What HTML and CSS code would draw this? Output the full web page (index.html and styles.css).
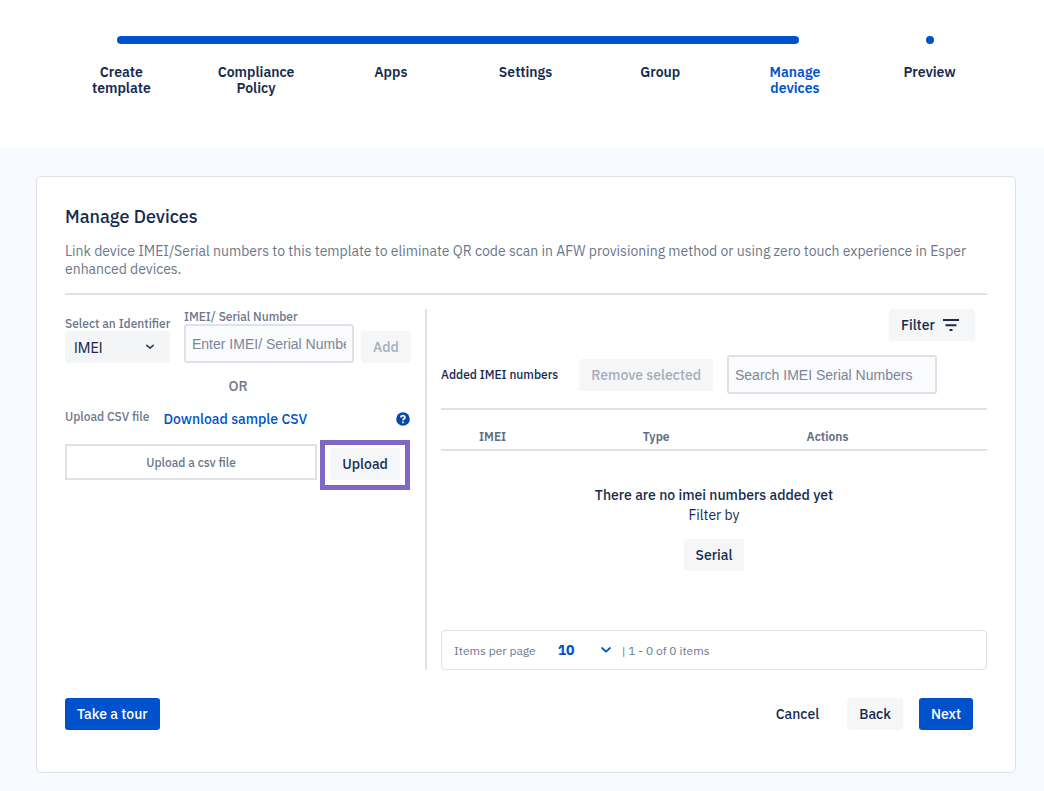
FILE: index.html
```
<!DOCTYPE html>
<html lang="en">
<head>
    <meta charset="UTF-8">
    <meta name="viewport" content="width=device-width, initial-scale=1">
    <title>Manage Devices</title>
    <link rel="stylesheet" href="styles.css">
</head>
<body>

    <header class="stepper">
        <div class="track">
            <div class="track-done"></div>
            <div class="track-dot"></div>
        </div>
        <ol class="steps">
            <li>Create<br>template</li>
            <li>Compliance<br>Policy</li>
            <li>Apps</li>
            <li>Settings</li>
            <li>Group</li>
            <li class="current" aria-current="step">Manage<br>devices</li>
            <li>Preview</li>
        </ol>
    </header>

    <main class="page">
        <section class="card">
            <h1>Manage Devices</h1>
            <p class="intro">Link device IMEI/Serial numbers to this template to eliminate QR code scan in AFW provisioning method or using zero touch experience in Esper enhanced devices.</p>

            <div class="content">
                <div class="add-panel">
                    <div class="add-row">
                        <div class="field">
                            <label for="identifier">Select an Identifier</label>
                            <div class="select-box">
                                <select id="identifier">
                                    <option>IMEI</option>
                                    <option>Serial</option>
                                </select>
                                <svg class="chevron" viewBox="0 0 10 6"><path d="M1.8 1.3 5 4.2 8.2 1.3"/></svg>
                            </div>
                        </div>
                        <div class="field field-number">
                            <label for="number">IMEI/ Serial Number</label>
                            <input type="text" id="number" placeholder="Enter IMEI/ Serial Number">
                        </div>
                        <button class="btn" type="button" disabled>Add</button>
                    </div>

                    <p class="or">OR</p>

                    <div class="csv-head">
                        <label for="csvFile">Upload CSV file</label>
                        <a href="#">Download sample CSV</a>
                        <svg class="help" viewBox="0 0 14 14" role="img" aria-label="Help">
                            <circle cx="7" cy="7" r="6.8"/>
                            <path d="M5 5.5C5 3 9 3 9 5.4 9 6.9 7 6.7 7 8.3"/>
                            <path d="M7 9.6v1.6"/>
                        </svg>
                    </div>
                    <div class="csv-row">
                        <button class="file-box" type="button" id="csvFile">Upload a csv file</button>
                        <div class="highlight">
                            <button class="btn" type="button">Upload</button>
                        </div>
                    </div>
                </div>

                <div class="list-panel">
                    <button class="btn filter-btn" type="button">
                        Filter
                        <svg class="filter-icon" viewBox="0 0 18 12"><path d="M1 1h16M3.5 6.2h11"/><path d="M7.5 11h3"/></svg>
                    </button>

                    <div class="toolbar">
                        <span class="toolbar-title">Added IMEI numbers</span>
                        <button class="btn" type="button" disabled>Remove selected</button>
                        <input type="text" class="search" aria-label="Search" placeholder="Search IMEI Serial Numbers">
                    </div>

                    <table class="devices">
                        <thead>
                            <tr><th>IMEI</th><th>Type</th><th>Actions</th></tr>
                        </thead>
                        <tbody>
                            <tr>
                                <td colspan="3">
                                    <strong>There are no imei numbers added yet</strong>
                                    <span>Filter by</span>
                                    <button class="btn" type="button">Serial</button>
                                </td>
                            </tr>
                        </tbody>
                    </table>

                    <div class="pager">
                        <label for="perPage">Items per page</label>
                        <div class="select-box">
                            <select id="perPage">
                                <option>10</option>
                                <option>20</option>
                            </select>
                            <svg class="chevron" viewBox="0 0 10 6"><path d="M1 1 5 4.6 9 1"/></svg>
                        </div>
                        <span>| 1 - 0 of 0 items</span>
                    </div>
                </div>
            </div>

            <footer class="actions">
                <button class="btn btn-primary tour" type="button">Take a tour</button>
                <button class="btn btn-plain" type="button">Cancel</button>
                <button class="btn" type="button">Back</button>
                <button class="btn btn-primary" type="button">Next</button>
            </footer>
        </section>
    </main>

</body>
</html>
```

FILE: styles.css
```
* {
    box-sizing: border-box;
}

body {
    margin: 0;
    font-family: "IBM Plex Sans", Roboto, "Liberation Sans", sans-serif;
    font-size: 14px;
    color: #172b4d;
    background: #f7faff;
}

button, input, select {
    font: inherit;
    color: inherit;
}

/* progress steps */
.stepper {
    height: 148px;
    padding: 36px 47px 0 54px;
    background: #fff;
}

.track {
    display: grid;
    grid-template-columns: repeat(14, 1fr);
}

.track-done, .track-dot {
    height: 8px;
    margin: 0 -4px;
    border-radius: 4px;
    background: #0052cc;
}

.track-done {
    grid-column: 2 / 12;
}

.track-dot {
    grid-column: 14;
    width: 8px;
}

.steps {
    display: grid;
    grid-template-columns: repeat(7, 1fr);
    margin: 20px 0 0;
    padding: 0;
    list-style: none;
    text-align: center;
    font-weight: 600;
    line-height: 16px;
}

.current {
    color: #0052cc;
}

/* card */
.page {
    padding: 28px 28px 18px 36px;
}

.card {
    padding: 28px 28px 42px;
    background: #fff;
    border: 1px solid #dfe1e6;
    border-radius: 5px;
}

h1 {
    margin: 0;
    font-size: 18px;
    font-weight: 500;
    line-height: 24px;
}

.intro {
    margin: 13px 0 14px;
    padding-bottom: 15px;
    border-bottom: 2px solid #dfe1e6;
    color: #6b778c;
    line-height: 18px;
}

.content {
    display: grid;
    grid-template-columns: 362px 1fr;
}

label {
    color: #6b778c;
    font-size: 12px;
    font-weight: 500;
    line-height: 15px;
    white-space: nowrap;
}

.btn {
    height: 32px;
    padding: 0 12px;
    border: 0;
    border-radius: 3px;
    background: #f5f6f8;
    font-weight: 500;
    white-space: nowrap;
    cursor: pointer;
}

.btn:disabled {
    color: #a5adba;
    cursor: default;
}

.btn-primary {
    background: #0052cc;
    color: #fff;
}

.btn-plain {
    background: none;
}

input {
    width: 100%;
    height: 39px;
    padding: 0 6px;
    border: 2px solid #dfe1e6;
    border-radius: 3px;
    background: #fafbfc;
    font-family: "Liberation Sans", sans-serif;
}

input::placeholder {
    color: #7a869a;
}

.select-box {
    display: grid;
    align-items: center;
}

.select-box select {
    grid-area: 1 / 1;
    width: 100%;
    height: 32px;
    border: 0;
    border-radius: 3px;
    appearance: none;
}

.chevron {
    grid-area: 1 / 1;
    justify-self: end;
    width: 10px;
    height: 6px;
    fill: none;
    stroke: currentColor;
    stroke-width: 1.7;
    stroke-linecap: round;
    pointer-events: none;
}

/* left side */
.add-panel {
    padding-right: 14px;
    border-right: 2px solid #dfe1e6;
}

.add-row {
    display: flex;
    align-items: flex-end;
    height: 54px;
}

.field {
    display: flex;
    flex-direction: column;
    width: 105px;
}

.field-number {
    width: 170px;
    margin: 0 7px 0 14px;
}

.field select {
    padding: 0 9px;
    background: #f4f5f7;
    font-family: Inter, "Liberation Sans", sans-serif;
}

.field .chevron {
    margin-right: 15px;
    color: #344563;
}

.or {
    margin: 15px 0;
    color: #6b778c;
    font-weight: 500;
    line-height: 16px;
    text-align: center;
}

.csv-head {
    display: flex;
    align-items: center;
    gap: 14px;
    height: 20px;
    margin-bottom: 11px;
}

.csv-head label {
    align-self: flex-start;
}

.csv-head a {
    color: #0052cc;
    font-weight: 500;
    text-decoration: none;
}

.help {
    width: 14px;
    margin-left: auto;
    margin-right: 1px;
    fill: none;
    stroke: #fff;
    stroke-width: 1.7;
}

.help circle {
    fill: #0747a6;
    stroke: none;
}

.csv-row {
    display: flex;
    gap: 3px;
    padding-right: 1px;
}

.file-box {
    flex: 1;
    height: 36px;
    margin-top: 4px;
    border: 2px solid #dfe1e6;
    background: #fff;
    color: #6b778c;
    font-size: 12px;
    font-weight: 500;
}

.highlight {
    width: 90px;
    padding: 3px 5px 5px;
    border: 5px solid #8067c5;
    text-align: center;
}

/* right side */
.list-panel {
    display: flex;
    flex-direction: column;
    padding-left: 14px;
}

.filter-btn {
    display: flex;
    align-items: center;
    gap: 7px;
    align-self: flex-end;
    width: 86px;
    margin-right: 12px;
}

.filter-icon {
    width: 18px;
    height: 12px;
    fill: none;
    stroke: currentColor;
    stroke-width: 2;
}

.toolbar {
    display: flex;
    align-items: center;
    gap: 14px;
    padding: 14px 50px 14px 0;
    border-bottom: 2px solid #dfe1e6;
}

.toolbar-title {
    flex: 1;
    font-size: 12px;
    font-weight: 500;
    white-space: nowrap;
}

.search {
    width: 210px;
}

.devices {
    width: 100%;
    table-layout: fixed;
    border-collapse: collapse;
}

.devices th {
    height: 40px;
    padding: 13px 0 0 38px;
    border-bottom: 2px solid #dfe1e6;
    color: #5e6c84;
    font-size: 12px;
    font-weight: 600;
    text-align: left;
}

.devices th:nth-child(-n+2) {
    width: 30%;
}

.devices td {
    height: 180px;
    padding: 34px 0 0;
    line-height: 20px;
    text-align: center;
    vertical-align: top;
}

.devices strong, .devices span {
    display: block;
    font-weight: 500;
}

.devices span {
    margin-bottom: 14px;
    font-weight: 400;
}

.pager {
    display: flex;
    align-items: center;
    height: 40px;
    padding: 0 12px;
    border: 1px solid #dfe1e6;
    border-radius: 4px;
    color: #6b778c;
    font-size: 12px;
}

.pager label {
    font-weight: 400;
}

.pager .select-box {
    width: 53px;
    margin: 0 11px 0 22px;
    color: #0052cc;
}

.pager select {
    padding: 0;
    background: none;
    font-size: 14px;
    font-weight: 700;
}

/* bottom buttons */
.actions {
    display: flex;
    gap: 16px;
    padding: 28px 14px 0 0;
}

.tour {
    margin-right: auto;
}
```
